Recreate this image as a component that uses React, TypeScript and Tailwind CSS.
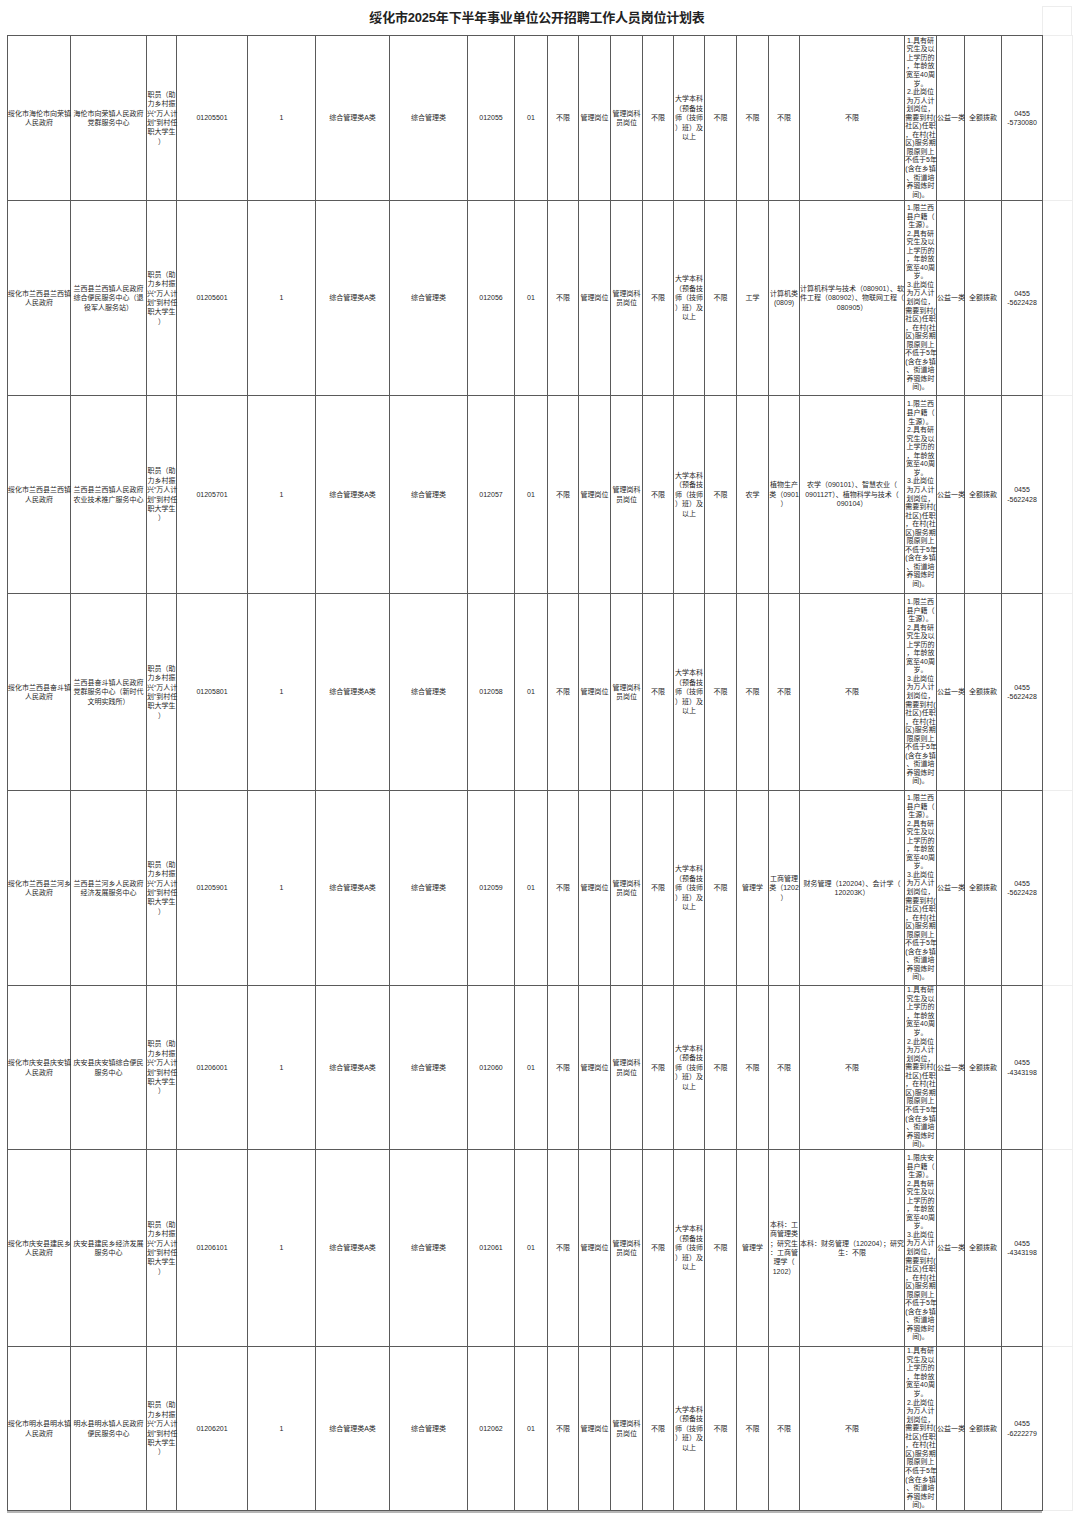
import * as React from "react"

// 绥化市2025年下半年事业单位公开招聘工作人员岗位计划表

const COLS = [63, 76, 30, 71, 68, 74, 78, 47, 33, 31, 32, 32, 31, 31, 32, 32, 31, 105, 32, 28, 37, 41]

const JOB = ["职员（助", "力乡村振", "兴“万人计", "划”到村任", "职大学生", "）"]
const EDU = ["大学本科", "（预备技", "师（技师", "）班）及", "以上"]

const BASE = [
  "究生及以", "上学历的", "，年龄放", "宽至40周", "岁。",
]
const TAIL = [
  "为万人计", "划岗位，", "需要到村(", "社区)任职", "，在村(社", "区)服务期",
  "限原则上", "不低于5年", "(含在乡镇", "、街道培", "养锻炼时", "间)。",
]

const plain = ["1.具有研", ...BASE, "2.此岗位", ...TAIL]
const local = (c: string) => [
  `1.限${c}`, "县户籍（", "生源）。", "2.具有研", ...BASE, "3.此岗位", ...TAIL,
]

type Row = {
  h: number
  dept: string[]
  unit: string[]
  code: string
  sub: string
  cat: string[]
  kind: string[]
  major: string[]
  cond: string[]
  phone: string
}

const rows: Row[] = [
  {
    h: 165,
    dept: ["绥化市海伦市向荣镇", "人民政府"],
    unit: ["海伦市向荣镇人民政府", "党群服务中心"],
    code: "01205501", sub: "012055",
    cat: ["不限"], kind: ["不限"], major: ["不限"],
    cond: plain, phone: "-5730080",
  },
  {
    h: 195,
    dept: ["绥化市兰西县兰西镇", "人民政府"],
    unit: ["兰西县兰西镇人民政府", "综合便民服务中心（退", "役军人服务站）"],
    code: "01205601", sub: "012056",
    cat: ["工学"], kind: ["计算机类", "(0809)"],
    major: ["计算机科学与技术（080901）、软", "件工程（080902）、物联网工程（", "080905）"],
    cond: local("兰西"), phone: "-5622428",
  },
  {
    h: 198,
    dept: ["绥化市兰西县兰西镇", "人民政府"],
    unit: ["兰西县兰西镇人民政府", "农业技术推广服务中心"],
    code: "01205701", sub: "012057",
    cat: ["农学"], kind: ["植物生产", "类（0901", "）"],
    major: ["农学（090101）、智慧农业（", "090112T）、植物科学与技术（", "090104）"],
    cond: local("兰西"), phone: "-5622428",
  },
  {
    h: 197,
    dept: ["绥化市兰西县奋斗镇", "人民政府"],
    unit: ["兰西县奋斗镇人民政府", "党群服务中心（新时代", "文明实践所）"],
    code: "01205801", sub: "012058",
    cat: ["不限"], kind: ["不限"], major: ["不限"],
    cond: local("兰西"), phone: "-5622428",
  },
  {
    h: 195,
    dept: ["绥化市兰西县兰河乡", "人民政府"],
    unit: ["兰西县兰河乡人民政府", "经济发展服务中心"],
    code: "01205901", sub: "012059",
    cat: ["管理学"], kind: ["工商管理", "类（1202", "）"],
    major: ["财务管理（120204）、会计学（", "120203K）"],
    cond: local("兰西"), phone: "-5622428",
  },
  {
    h: 164,
    dept: ["绥化市庆安县庆安镇", "人民政府"],
    unit: ["庆安县庆安镇综合便民", "服务中心"],
    code: "01206001", sub: "012060",
    cat: ["不限"], kind: ["不限"], major: ["不限"],
    cond: plain, phone: "-4343198",
  },
  {
    h: 197,
    dept: ["绥化市庆安县建民乡", "人民政府"],
    unit: ["庆安县建民乡经济发展", "服务中心"],
    code: "01206101", sub: "012061",
    cat: ["管理学"], kind: ["本科：工", "商管理类", "；研究生", "：工商管", "理学（", "1202）"],
    major: ["本科：财务管理（120204）；研究", "生：不限"],
    cond: local("庆安"), phone: "-4343198",
  },
  {
    h: 164,
    dept: ["绥化市明水县明水镇", "人民政府"],
    unit: ["明水县明水镇人民政府", "便民服务中心"],
    code: "01206201", sub: "012062",
    cat: ["不限"], kind: ["不限"], major: ["不限"],
    cond: plain, phone: "-6222279",
  },
]

function Cell({ lines, tight }: { lines: string[]; tight?: boolean }) {
  return (
    <td className="border border-[#5a5a5a] p-0 text-center align-middle overflow-visible">
      <div className={tight ? "leading-[8.55px]" : "leading-[9.4px]"}>
        {lines.map((l, i) => (
          <div key={i} className="whitespace-nowrap">
            {l}
          </div>
        ))}
      </div>
    </td>
  )
}

export default function App() {
  return (
    <div className="w-[1080px] min-h-[1522px] bg-white text-[#1f1f1f] font-['Liberation_Sans','Noto_Sans_CJK_SC',sans-serif]">
      <div className="flex">
        <div className="w-[1042px] h-[35px] flex items-center justify-center pl-[32px]">
          <h1 className="text-[13px] font-bold tracking-[-0.2px] text-[#222]">
            绥化市2025年下半年事业单位公开招聘工作人员岗位计划表
          </h1>
        </div>
        <div className="mt-[6px] w-[30px] h-[29px] border border-b-0 border-[#ededed]" />
      </div>
      <table className="ml-[7px] w-[1065px] table-fixed border-collapse text-[7px]">
        <colgroup>
          {COLS.map((w, i) => (
            <col key={i} style={{ width: w }} />
          ))}
          <col style={{ width: 30 }} />
        </colgroup>
        <tbody>
          {rows.map((r, i) => (
            <tr key={i} style={{ height: r.h }}>
              <Cell lines={r.dept} />
              <Cell lines={r.unit} />
              <Cell lines={JOB} />
              <Cell lines={[r.code]} />
              <Cell lines={["1"]} />
              <Cell lines={["综合管理类A类"]} />
              <Cell lines={["综合管理类"]} />
              <Cell lines={[r.sub]} />
              <Cell lines={["01"]} />
              <Cell lines={["不限"]} />
              <Cell lines={["管理岗位"]} />
              <Cell lines={["管理岗科", "员岗位"]} />
              <Cell lines={["不限"]} />
              <Cell lines={EDU} />
              <Cell lines={["不限"]} />
              <Cell lines={r.cat} />
              <Cell lines={r.kind} />
              <Cell lines={r.major} />
              <Cell lines={r.cond} tight />
              <Cell lines={["公益一类"]} />
              <Cell lines={["全额拨款"]} />
              <Cell lines={["0455", r.phone]} />
              <td className="border border-[#ededed] p-0" />
            </tr>
          ))}
        </tbody>
      </table>
      <div className="ml-[7px] w-[1035px] h-[2px] bg-[#b5b5b5]" />
    </div>
  )
}
